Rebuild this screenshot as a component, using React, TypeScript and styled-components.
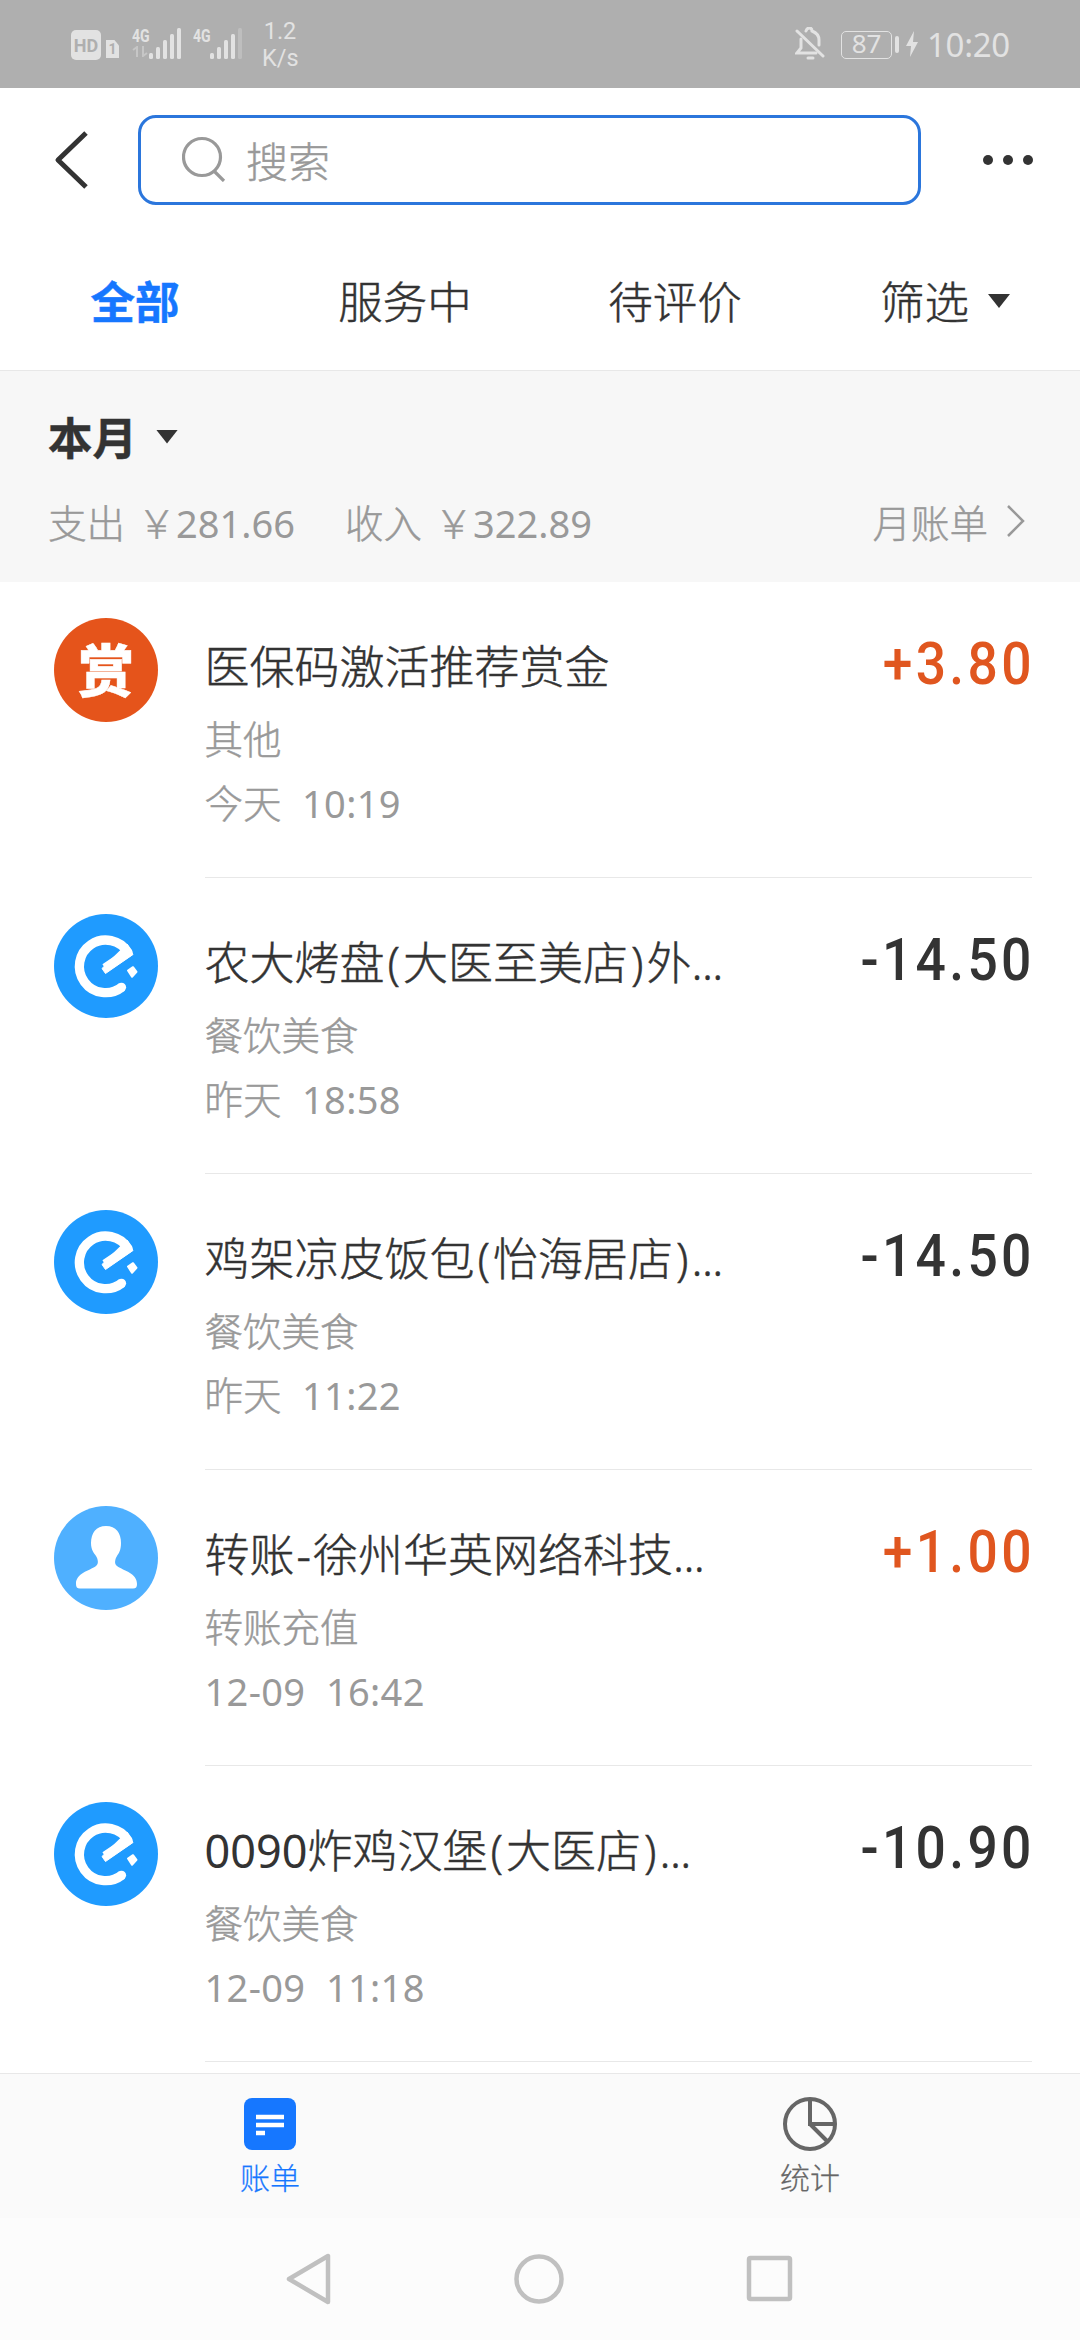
import React from "react";
import styled, { createGlobalStyle } from "styled-components";

const sans = `"Noto Sans", "Noto Sans CJK SC", sans-serif`;
const cjk = `"Noto Sans CJK SC", "Noto Sans", sans-serif`;

const GlobalStyle = createGlobalStyle`
  * { box-sizing: border-box; }
  body { margin: 0; background: #fff; }
  svg { display: block; flex: none; }
`;

const Screen = styled.div`
  width: 1080px;
  height: 2340px;
  display: flex;
  flex-direction: column;
  overflow: hidden;
  background: #fff;
  color: #333;
  font-family: ${sans};
  font-weight: 300;
  -webkit-text-stroke: 0.45px currentColor;
`;

/* ---------- status bar ---------- */

const StatusBar = styled.header`
  height: 88px;
  flex: none;
  display: flex;
  justify-content: space-between;
  padding: 0 71px;
  background: #afafaf;
  color: #e2e2e2;
  -webkit-text-stroke: 0;
`;

const StatusGroup = styled.div`
  display: flex;
  align-items: center;
`;

const HdBadge = styled.span`
  width: 30px;
  height: 30px;
  margin-top: 2px;
  border-radius: 5px;
  background: #e2e2e2;
  color: #afafaf;
  font: 700 18px/31px Roboto, sans-serif;
  text-align: center;
`;

const SimBadge = styled.span`
  width: 13px;
  height: 18px;
  margin: 10px 13px 0 5px;
  background: #e2e2e2;
  clip-path: polygon(0 0, 65% 0, 100% 30%, 100% 100%, 0 100%);
  color: #afafaf;
  font: 700 14px/19px Roboto, sans-serif;
  text-align: center;
`;

const Signal = styled.div`
  display: flex;
  width: 61px;
  height: 32px;
`;

const SignalLabel = styled.div`
  width: 17px;
  display: flex;
  flex-direction: column;
`;

const Network = styled.span`
  font: 700 19px/16px Roboto, sans-serif;
  width: 24px;
  height: 18px;
  transform: scaleX(0.74);
  transform-origin: left;
`;

const Speed = styled.div`
  width: 36px;
  margin: 2px 0 0 8px;
  text-align: center;
  font: 400 23.5px/27px Roboto, sans-serif;
`;

const Battery = styled.div`
  width: 51px;
  height: 28px;
  margin: 1px 0 0 16px;
  border: 1.5px solid #e2e2e2;
  border-radius: 5px;
  text-align: center;
  font: 400 26px/23px ${sans};
`;

const BatteryTip = styled.div`
  width: 4px;
  height: 17px;
  margin: 1px 7px 0 3px;
  border-radius: 2px;
  background: #e2e2e2;
`;

const Clock = styled.span`
  margin: 2px 0 0 9px;
  font: 400 33px/88px ${sans};
  letter-spacing: -0.3px;
  width: 82px;
  white-space: nowrap;
`;

/* ---------- top bar ---------- */

const TopBar = styled.div`
  height: 144px;
  flex: none;
  display: flex;
  align-items: center;
  padding: 0 47px 0 54px;
`;

const SearchBox = styled.div`
  width: 783px;
  height: 90px;
  margin: 0 62px 0 48px;
  padding: 0 0 2px 41px;
  display: flex;
  align-items: center;
  gap: 20px;
  border: 3px solid #2b76dc;
  border-radius: 18px;
  color: #999;
  font-size: 42px;
`;

const Tabs = styled.nav`
  height: 139px;
  flex: none;
  display: grid;
  grid-template-columns: repeat(4, 270px);
  border-bottom: 1px solid #e8e8e8;
`;

const Tab = styled.div<{ $active?: boolean }>`
  display: flex;
  justify-content: center;
  align-items: center;
  gap: 19px;
  height: 135px;
  color: ${(p) => (p.$active ? "#1677ff" : "#333")};
  font-size: 44.5px;
  font-weight: ${(p) => (p.$active ? 700 : 300)};
`;

const Caret = styled.i`
  width: 22px;
  height: 14px;
  margin-top: 3px;
  background: #333;
  clip-path: polygon(0 0, 100% 0, 50% 100%);
`;

/* ---------- month summary ---------- */

const Summary = styled.section`
  height: 211px;
  flex: none;
  padding: 34px 54px 0 48px;
  background: #f7f7f7;
`;

const Month = styled.div`
  display: flex;
  align-items: center;
  gap: 19px;
  height: 60px;
  font-size: 44.5px;
  font-weight: 700;
`;

const Totals = styled.div`
  display: flex;
  align-items: center;
  height: 50px;
  margin-top: 31px;
  color: #999;
  font-size: 38.5px;
  white-space: pre;
`;

const Total = styled.span`
  width: 297px;
`;

const Yen = styled.span`
  margin-left: 12.5px;
`;

const Digits = styled.span`
  font-weight: 400;
  font-size: 38px;
  letter-spacing: 0.35px;
  -webkit-text-stroke: 0;
`;

const SumDigits = styled(Digits)`
  letter-spacing: 0;
`;

const MonthlyLink = styled.span`
  display: flex;
  align-items: center;
  gap: 18px;
  margin-left: auto;
`;

/* ---------- bill list ---------- */

const List = styled.main`
  height: 1491px;
  flex: none;
`;

const Row = styled.article`
  height: 296px;
  display: flex;
  gap: 46.5px;
  padding: 0 48px 0 54px;
`;

const Avatar = styled.div<{ $color: string }>`
  width: 104px;
  height: 104px;
  margin-top: 36px;
  flex: none;
  border-radius: 50%;
  background: ${(p) => p.$color};
  color: #fff;
  text-align: center;
  font: 900 56px/99px ${cjk};
`;

const RowBody = styled.div`
  flex: 1;
  display: flex;
  justify-content: space-between;
  border-bottom: 1px solid #e8e8e8;
  white-space: pre;
`;

const Title = styled.h3`
  margin: 54px 0 10px;
  font-size: 45px;
  line-height: 61px;
  font-weight: 300;
`;

const Latin = styled.span`
  font-weight: 400;
  -webkit-text-stroke: 0;
`;

const Hyphen = styled.span`
  padding: 0 2px;
`;

const Paren = styled.span`
  padding: 0 3px;
`;

const Dots = styled.span`
  letter-spacing: -0.6px;
`;

const Meta = styled.div`
  color: #999;
  font-size: 38.5px;
  line-height: 65px;

  & + & {
    line-height: 63px;
  }
`;

const Amount = styled.div<{ $income: boolean }>`
  margin: 51px -3px 0 0;
  color: ${(p) => (p.$income ? "#e0561f" : "#333")};
  font: 500 60px/61px Roboto, sans-serif;
  letter-spacing: 3.7px;
  transform: scaleX(0.89);
  transform-origin: right;
  -webkit-text-stroke: 0;
`;

/* ---------- bottom bars ---------- */

const BottomTabs = styled.nav`
  height: 145px;
  flex: none;
  display: grid;
  grid-template-columns: 1fr 1fr;
  border-top: 1px solid #e8e8e8;
  background: #fafafa;
`;

const BottomTab = styled.div<{ $active?: boolean }>`
  display: flex;
  flex-direction: column;
  align-items: center;
  padding-top: 22px;
  gap: 5px;
  color: ${(p) => (p.$active ? "#1677ff" : "#666")};
  font-size: 30px;
  line-height: 42px;
  -webkit-text-stroke-width: 0.25px;
`;

const SystemNav = styled.footer`
  height: 122px;
  flex: none;
  display: flex;
  align-items: center;
  justify-content: space-between;
  padding: 0 286px;
  background: #fcfcfc;
`;

/* ---------- drawings ---------- */

const Bars = ({ dim }: { dim?: boolean }) => (
  <svg width="33" height="32" viewBox="0 0 33 32" fill="#e2e2e2">
    <rect x="0" y="25" width="4" height="6" rx="1.5" />
    <rect x="7" y="19" width="4" height="12" rx="1.5" />
    <rect x="14" y="12" width="4" height="19" rx="1.5" />
    <rect x="21" y="6" width="4" height="25" rx="1.5" />
    <rect x="28" y="0" width="4" height="31" rx="1.5" opacity={dim ? 0.3 : 1} />
  </svg>
);

const BellOff = () => (
  <svg width="30" height="34" viewBox="0 0 30 34" fill="none" stroke="#e2e2e2" strokeWidth="3" strokeLinecap="round">
    <path d="M2 4 28 29" />
    <path d="M6 12v9l-4 5h19M11 4c1-4 6-4 6 0 5 2 7 5 7 9v5" />
    <path d="M13 31h5" />
  </svg>
);

const Bolt = () => (
  <svg width="12" height="26" viewBox="0 0 12 26" fill="#e2e2e2">
    <path d="M8 0 0 15h5L4 26l8-15H7z" />
  </svg>
);

const EleLogo = () => (
  <svg width="104" height="104" viewBox="0 0 104 104">
    <path
      d="M51 54 74 38.500A26.300 26.300 0 1 0 68 73"
      fill="none"
      stroke="#fff"
      strokeWidth="9.300"
      strokeLinejoin="round"
    />
    <circle cx="67.500" cy="73.300" r="4.600" fill="#fff" />
    <path d="M48 54.500 51.500 59.500 79 40.500 73 30Z" fill="#fff" stroke="#fff" strokeWidth="1" strokeLinejoin="round" />
    <path d="M74 56.500 79 53.200 82.500 57.800 78 62.800Z" fill="#fff" stroke="#fff" strokeWidth="2" strokeLinejoin="round" />
  </svg>
);

const Person = () => (
  <svg width="104" height="104" viewBox="0 0 104 104" fill="#fff">
    <path d="M52 20c10 0 15 7 15 17 0 7-2 10-4 13-2 3-3 8 0 10 7 5 20 7 20 18 0 3-1 4.500-4 4.500H26c-3 0-4-1.500-4-4.500 0-11 13-13 20-18 3-2 2-7 0-10-2-3-5-6-5-13 0-10 5-17 15-17z" />
  </svg>
);

/* ---------- data ---------- */

type Kind = "reward" | "ele" | "person";

const bills: { kind: Kind; title: string; meta: string; day: string; time: string; amount: string }[] = [
  { kind: "reward", title: "医保码激活推荐赏金", meta: "其他", day: "今天", time: "10:19", amount: "+3.80" },
  { kind: "ele", title: "农大烤盘(大医至美店)外...", meta: "餐饮美食", day: "昨天", time: "18:58", amount: "-14.50" },
  { kind: "ele", title: "鸡架凉皮饭包(怡海居店)...", meta: "餐饮美食", day: "昨天", time: "11:22", amount: "-14.50" },
  { kind: "person", title: "转账-徐州华英网络科技...", meta: "转账充值", day: "12-09", time: "16:42", amount: "+1.00" },
  { kind: "ele", title: "0090炸鸡汉堡(大医店)...", meta: "餐饮美食", day: "12-09", time: "11:18", amount: "-10.90" },
];

const avatarColor: Record<Kind, string> = { reward: "#e5541b", ele: "#1f9bff", person: "#4fb0ff" };

const renderTitle = (title: string) =>
  title.split(/(\.\.\.|[()]|-|\d+)/).map((part, i) => {
    if (part === "...") return <Dots key={i}>{part}</Dots>;
    if (part === "(" || part === ")") return <Paren key={i}>{part}</Paren>;
    if (part === "-") return <Hyphen key={i}>{part}</Hyphen>;
    if (/^\d+$/.test(part)) return <Latin key={i}>{part}</Latin>;
    return part;
  });

export default function App() {
  return (
    <Screen>
      <GlobalStyle />
      <StatusBar>
        <StatusGroup>
          <HdBadge>HD</HdBadge>
          <SimBadge>1</SimBadge>
          <Signal>
            <SignalLabel>
              <Network>4G</Network>
              <svg width="16" height="11" viewBox="0 0 16 11" fill="none" stroke="#e2e2e2" strokeWidth="2" opacity="0.45">
                <path d="M1 4 5 1v10M11 0v10l4-3" />
              </svg>
            </SignalLabel>
            <Bars />
          </Signal>
          <Signal>
            <SignalLabel>
              <Network>4G</Network>
            </SignalLabel>
            <Bars dim />
          </Signal>
          <Speed>
            1.2
            <br />
            K/s
          </Speed>
        </StatusGroup>
        <StatusGroup>
          <BellOff />
          <Battery>87</Battery>
          <BatteryTip />
          <Bolt />
          <Clock>10:20</Clock>
        </StatusGroup>
      </StatusBar>

      <TopBar>
        <svg width="36" height="58" viewBox="0 0 36 58" fill="none" stroke="#333" strokeWidth="5">
          <path d="M32 2 4 29 32 56" strokeLinejoin="round" />
        </svg>
        <SearchBox>
          <svg width="44" height="46" viewBox="0 0 44 46" fill="none" stroke="#999" strokeWidth="3.200">
            <circle cx="20" cy="21" r="18.500" />
            <path d="M32 35 42 45" />
          </svg>
          搜索
        </SearchBox>
        <svg width="50" height="10" viewBox="0 0 50 10" fill="#333">
          <circle cx="5" cy="5" r="5" />
          <circle cx="25" cy="5" r="5" />
          <circle cx="45" cy="5" r="5" />
        </svg>
      </TopBar>

      <Tabs>
        <Tab $active>全部</Tab>
        <Tab>服务中</Tab>
        <Tab>待评价</Tab>
        <Tab>
          筛选
          <Caret />
        </Tab>
      </Tabs>

      <Summary>
        <Month>
          本月
          <Caret />
        </Month>
        <Totals>
          <Total>
            支出<Yen>￥</Yen>
            <SumDigits>281.66</SumDigits>
          </Total>
          <Total>
            收入<Yen>￥</Yen>
            <SumDigits>322.89</SumDigits>
          </Total>
          <MonthlyLink>
            月账单
            <svg width="20" height="34" viewBox="0 0 20 34" fill="none" stroke="#999" strokeWidth="2.500">
              <path d="M2 2 17 17 2 32" />
            </svg>
          </MonthlyLink>
        </Totals>
      </Summary>

      <List>
        {bills.map((b, i) => (
          <Row key={i}>
            <Avatar $color={avatarColor[b.kind]}>
              {b.kind === "reward" && "赏"}
              {b.kind === "ele" && <EleLogo />}
              {b.kind === "person" && <Person />}
            </Avatar>
            <RowBody>
              <div>
                <Title>{renderTitle(b.title)}</Title>
                <Meta>{b.meta}</Meta>
                <Meta>
                  {/\d/.test(b.day) ? <Digits>{b.day}</Digits> : b.day}
                  <Digits>{"  " + b.time}</Digits>
                </Meta>
              </div>
              <Amount $income={b.amount[0] === "+"}>{b.amount}</Amount>
            </RowBody>
          </Row>
        ))}
      </List>

      <BottomTabs>
        <BottomTab $active>
          <svg width="56" height="56" viewBox="0 0 56 56">
            <rect x="2" y="2" width="52" height="52" rx="8" fill="#1677ff" />
            <path d="M14 21h28M14 29h28M14 37h9" stroke="#fff" strokeWidth="4.500" />
          </svg>
          账单
        </BottomTab>
        <BottomTab>
          <svg width="56" height="56" viewBox="0 0 56 56" fill="none" stroke="#666" strokeWidth="4">
            <circle cx="28" cy="28" r="25" />
            <path d="M28 3v25h25M28 28l18 18" />
          </svg>
          统计
        </BottomTab>
      </BottomTabs>

      <SystemNav>
        <svg width="46" height="52" viewBox="0 0 46 52" fill="none" stroke="#c0c0c0" strokeWidth="4.500" strokeLinejoin="round">
          <path d="M42 3v46L3 26z" />
        </svg>
        <svg width="50" height="50" viewBox="0 0 50 50" fill="none" stroke="#c0c0c0" strokeWidth="4.500">
          <circle cx="25" cy="25" r="22.500" />
        </svg>
        <svg width="48" height="48" viewBox="0 0 48 48" fill="none" stroke="#c0c0c0" strokeWidth="4.500">
          <rect x="3" y="3" width="41" height="41" rx="1.500" />
        </svg>
      </SystemNav>
    </Screen>
  );
}
